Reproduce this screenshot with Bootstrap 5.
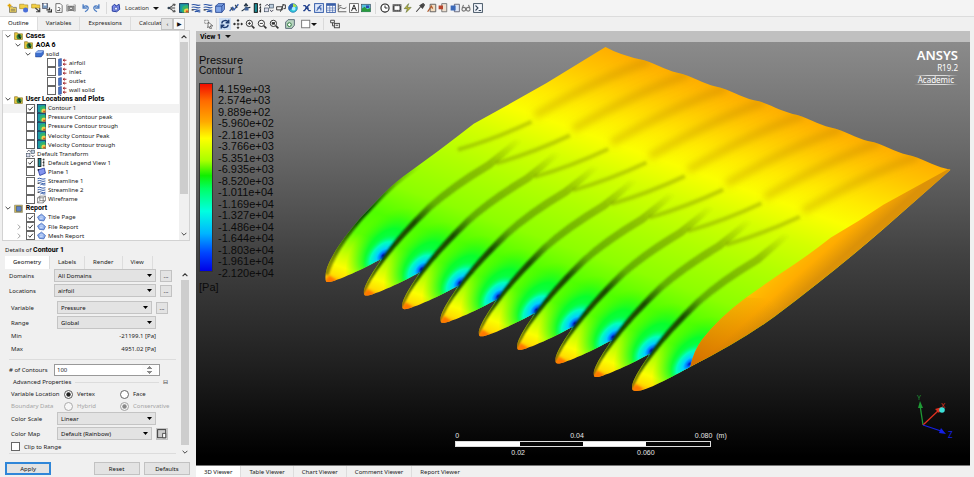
<!DOCTYPE html>
<html lang="en">
<head>
<meta charset="utf-8">
<meta name="viewport" content="width=device-width, initial-scale=1">
<title>CFD-Post</title>
<link href="https://cdn.jsdelivr.net/npm/bootstrap@5.3.0/dist/css/bootstrap.min.css" rel="stylesheet">
<style>
body{font:6px/8px "Noto Sans","Open Sans",sans-serif;color:#1a1a1a;background:#f0f0f0}
.fw-bold,strong{font-family:Roboto,"Noto Sans",sans-serif;font-size:7px;color:#000}
svg.ic{width:10px;height:10px;flex:none;display:block}
.tool{border:0;background:none;padding:0;display:flex;align-items:center;color:#333}
.topbar{height:17px;border-bottom:1px solid #dcdcdc;padding:0 7px;background:#f4f4f4}
.grp{display:flex;justify-content:space-between;align-items:center}
.g6{width:69px}.g5{width:58px}.g2{width:22px}.g9{width:103px}
.vsep{width:1px;height:12px;background:#dadada}
.caret{width:0;border:3px solid transparent;border-top:3px solid #111;border-bottom:0}
.side{flex:0 0 20%;min-width:196px;padding-right:6px}
.tabstrip{height:13px}
.tabstrip .nav-link{padding:2px 8px;color:#222;border-radius:0;border-right:1px solid #ddd}
.tabstrip .nav-link.active{background:#fff;color:#111}
.tree{background:#fff;border:1px solid #d2d2d2;margin-left:2px;margin-bottom:5px}
.tree li{flex:1 1 0;display:flex;align-items:center;gap:2px;white-space:nowrap}
.tree li.sel{background:#f2f2f2}
.tree li .ic{width:9px;height:9px}
.tree li.hd{gap:1px}
.exp{width:10px;flex:none;display:flex;justify-content:center}
.exp svg{width:6px;height:6px}
.l1{padding-left:10px}.l2{padding-left:20px}.l3{padding-left:44px}.c1{padding-left:23px}.x1{padding-left:11px}
.form-check-input{width:9px;height:9px;margin:0;flex:none;border:1px solid #666;float:none}
.form-check-input[type=checkbox]{border-radius:0}
.form-check-input:checked[type=checkbox]{background-color:#fff;border-color:#666;--bs-form-check-bg-image:url("data:image/svg+xml,%3csvg xmlns='http://www.w3.org/2000/svg' viewBox='0 0 10 10'%3e%3cpath fill='none' stroke='%23222' stroke-width='1.3' d='M2 5l2 2.5L8.500 2.500'/%3e%3c/svg%3e")}
.form-check-input:checked[type=radio]{background-color:#fff;border-color:#555;--bs-form-check-bg-image:url("data:image/svg+xml,%3csvg xmlns='http://www.w3.org/2000/svg' viewBox='0 0 10 10'%3e%3ccircle cx='5' cy='5' r='3.200' fill='%23222'/%3e%3c/svg%3e")}
.sbar{width:10px;flex:none;display:flex;flex-direction:column;align-items:center;background:#f0f0f0;padding:3px 0}
.sbar svg{width:6px;height:6px;flex:none}
.thumb{background:#cdcdcd;width:8px;margin-top:2px}
.details{padding-left:5px}
.frow{display:flex;align-items:center;min-height:13px;gap:4px}
.frow>label,.frow>.lab{width:41px;flex:none;white-space:nowrap}
.inset{padding-left:2px}
.inset>.frow>label,.inset .frow>label{width:42px}
.form-select{height:13px;min-height:0;padding:0 10px 0 3px;font-size:6px;line-height:8px;border:1px solid #c4c4c4;border-radius:0;background-color:#e3e3e3;color:#111;flex:1 1 0;min-width:0;
background-position:right 3px center;background-size:5px 5px;--bs-form-select-bg-img:url("data:image/svg+xml,%3csvg xmlns='http://www.w3.org/2000/svg' viewBox='0 0 10 10'%3e%3cpath d='M0 2h10L5 8z'/%3e%3c/svg%3e")}
.btn{font-size:6px;line-height:8px;padding:2px 4px;border-radius:0;border:1px solid #c2c2c2;background:#e3e3e3;color:#111}
.btn.more{width:12px;height:12px;padding:0;flex:none}
.btn.go{border:2px solid #2f86d8}
.btn.big{height:13px;padding:0 4px}
.num{height:12px;min-height:0;padding:0 2px;font-size:6px;line-height:8px;border:1px solid #999;border-radius:0;background:#fff}
.num::-webkit-inner-spin-button{opacity:1;height:10px}
.hr1{border-top:1px solid #dcdcdc}
.dim{color:#a5a5a5}
.viewbar{background:#c0c0c0;height:11px;padding-left:4px}
.stage{background:linear-gradient(#8b8b8b,#6b6b6b 24%,#424242 50%,#1f1f1f 77%,#000 98%);overflow:hidden;border-bottom:1px solid #777}
.stage .model{position:absolute;inset:0;width:100%;height:100%}
.legend{position:relative;font-family:"Liberation Sans",Arial,sans-serif;color:#0b0b0b;padding:13px 0 0 3px;font-size:11px;line-height:11px}
.legend .sub{font-size:10px;line-height:10px}
.rainbow{width:14px;height:189px;border:1px solid #333;background:linear-gradient(#f20d00,#ff6a00 9%,#ffa800 20%,#ffff00 29%,#a8ff00 41%,#10ee00 49%,#00ff66 56%,#00ffe0 68%,#00b4ff 80%,#0048ff 90%,#0000e6)}
.legbody{gap:5px;padding-top:7px;height:202px}
.vals{height:195px;margin-top:1px}
.vals li{flex:1 1 0;min-height:0;line-height:11px}
.brand{position:absolute;top:6px;right:12px;color:#fff;text-align:right}
.brand .nm{font:600 13px/15px "Noto Sans",sans-serif}
.brand .ver{font-size:8px;line-height:9px}
.brand .lic{font-size:8px;line-height:10px;margin-top:3px;padding:0 4px;background:linear-gradient(90deg,transparent,#ddd 30%,#ddd 70%,transparent) top/100% 1px no-repeat,linear-gradient(90deg,transparent,#ddd 30%,#ddd 70%,transparent) bottom/100% 1px no-repeat}
.ruler{position:absolute;left:33.5%;right:33.5%;bottom:8px;color:#e6e6e6;font:7px/8px "Liberation Sans",Arial,sans-serif}
.ruler .bar{border:1px solid #ddd;height:6px;margin:1px 0 2px}
.ruler .bar i{flex:1 1 0}.ruler .bar i:nth-child(odd){background:#fff}
.ruler .unit{margin-right:-16px}
.triad{position:absolute;right:12px;bottom:22px;width:45px;height:50px}
.mb-2px{margin-bottom:2px}.pb-2px{padding-bottom:2px}.gap-2px{gap:2px}.mt-2px{margin-top:2px}
.vtools{height:14px;flex:none}.tool.on{background:#cfe0f5;padding:1px}
.vtabs{height:11px}
.adv{min-height:12px}.rad{min-height:12px}.inset .rad>.rl{width:39px}.rad>.lab{width:49px}
.shrinkable{min-width:0;min-height:0}
</style>
<script src="https://cdn.jsdelivr.net/npm/bootstrap@5.3.0/dist/js/bootstrap.bundle.min.js"></script>
</head>
<body class="vh-100 d-flex flex-column overflow-hidden">
<svg width="0" height="0" class="position-absolute" aria-hidden="true"><defs>
<symbol id="chev" viewBox="0 0 10 10"><path d="M1 3l4 4 4-4" fill="none" stroke="#333" stroke-width="1.500"/></symbol>
<symbol id="chevu" viewBox="0 0 10 10"><path d="M1 7l4-4 4 4" fill="none" stroke="#333" stroke-width="1.800"/></symbol>
<symbol id="chevr" viewBox="0 0 10 10"><path d="M3 1l4 4-4 4" fill="none" stroke="#888" stroke-width="1.300"/></symbol>
<symbol id="i-open" viewBox="0 0 16 16"><path d="M4 6h5l1 1h5v8H4z" fill="#f5d860" stroke="#555"/><path d="M6 10h7M6 12.500h7" stroke="#555"/><path d="M1 4h6M4 1v6" stroke="#e2a400" stroke-width="2.500"/></symbol>
<symbol id="i-open2" viewBox="0 0 16 16"><path d="M1 2h7l1 1h5v6H1z" fill="#f3cf45" stroke="#a78a20"/><circle cx="10.500" cy="11" r="4" fill="#4a6fd8"/></symbol>
<symbol id="i-open3" viewBox="0 0 16 16"><path d="M1 2h7l1 1h5v5H1z" fill="#f3cf45" stroke="#a78a20"/><path d="M7 8l7 6M14 8v6H8" stroke="#444" stroke-width="1.800" fill="none"/></symbol>
<symbol id="i-save" viewBox="0 0 16 16"><rect x="1" y="1" width="8" height="8" fill="#7b9bc0" stroke="#445"/><path d="M3 1h4v3H3z" fill="#fff"/><path d="M7 11h5V7M9 14h6v-4" stroke="#333" stroke-width="2" fill="none"/></symbol>
<symbol id="i-doc" viewBox="0 0 16 16"><path d="M3 1h7l3 3v11H3z" fill="#fff" stroke="#555" stroke-width="1.300"/><path d="M6 8a2 2 0 1 1 2 3M5 12h5" fill="none" stroke="#555" stroke-width="1.500"/></symbol>
<symbol id="i-cam" viewBox="0 0 16 16"><path d="M1 3h3M12 3h3v10h-3M1 3v10h3" fill="none" stroke="#777"/><rect x="3" y="5" width="10" height="7" fill="#999" stroke="#555"/><circle cx="8" cy="8.500" r="2.300" fill="#eee" stroke="#444"/></symbol>
<symbol id="i-undo" viewBox="0 0 16 16"><path d="M5 2v6h6M5 8c1-5 9-4 8 1-1 3-3 4-5 5" fill="none" stroke="#4f7fc4" stroke-width="2.200"/></symbol>
<symbol id="i-redo" viewBox="0 0 16 16"><path d="M11 2v6H5M11 8c-1-5-9-4-8 1 1 3 3 4 5 5" fill="none" stroke="#4f7fc4" stroke-width="2.200"/></symbol>
<symbol id="i-loc" viewBox="0 0 16 16"><path d="M2 5l4-3 2 3 5-3 1 8-5 4-7-1z" fill="#7b8be8" stroke="#223a9c" stroke-width="1.500"/><circle cx="8" cy="9" r="2.500" fill="#e8edff" stroke="#223a9c"/></symbol>
<symbol id="i-vec" viewBox="0 0 16 16"><path d="M1 8h12M3 8l8-5M3 8l8 5M9 2l4 0-1 3M9 14h4l-1-3" fill="none" stroke="#333" stroke-width="1.500"/><circle cx="3" cy="8" r="2" fill="#345"/></symbol>
<symbol id="i-contour" viewBox="0 0 16 16"><rect x="1" y="1" width="14" height="14" fill="#1b9aa6" stroke="#135" stroke-width="1.500"/><path d="M5 15V9c0-4 4-6 10-5v11z" fill="#35b56a"/><path d="M8 15v-3c0-3 3-4 7-3v6z" fill="#f2d34a"/><path d="M11 15v-3h4v3z" fill="#d8502a"/></symbol>
<symbol id="i-stream" viewBox="0 0 16 16"><path d="M1 3c5-3 7 3 14 0M1 7c5-3 7 3 14 0M3 11c4-3 6 3 12 0M6 14c3-2 5 1 9 0" fill="none" stroke="#2c55a6" stroke-width="1.700"/><path d="M1 11h3" stroke="#222" stroke-width="2"/></symbol>
<symbol id="i-vol" viewBox="0 0 16 16"><path d="M1 5l4-4h10v9l-4 5H1z" fill="#7fa5e8" stroke="#1f3f8c" stroke-width="1.300"/><path d="M1 5h10v10M11 5l4-4" fill="none" stroke="#1f3f8c" stroke-width="1.300"/></symbol>
<symbol id="i-solid" viewBox="0 0 16 16"><path d="M1 7l4-4h10v6l-4 5H1z" fill="#3d6fd0" stroke="#1f3f8c"/><path d="M1 7l4-4h10l-4 4z" fill="#8fb2f0"/></symbol>
<symbol id="i-line" viewBox="0 0 16 16"><path d="M1 13L6 7l2 4 7-9" fill="none" stroke="#2c55a6" stroke-width="2"/><path d="M3 7l3 5M10 3l3 5" stroke="#345" stroke-width="2"/></symbol>
<symbol id="i-part" viewBox="0 0 16 16"><path d="M1 13l7-5 7-1M8 8V1M5 5l3-4 3 4" fill="none" stroke="#234" stroke-width="1.700"/><path d="M6 7h6v5H6z" fill="#41649c"/></symbol>
<symbol id="i-legend" viewBox="0 0 16 16"><rect x="2" y="1" width="5" height="14" fill="#1d8e98" stroke="#111" stroke-width="1.500"/><path d="M10 3h3M10 8h3M10 13h3M12 1v14" stroke="#333" stroke-width="1.700" stroke-dasharray="3 1"/></symbol>
<symbol id="i-xform" viewBox="0 0 16 16"><rect x="1" y="8" width="6" height="6" fill="#dde" stroke="#345"/><rect x="9" y="2" width="6" height="6" fill="#bcd" stroke="#345"/><path d="M2 5l3-3 3 3M10 11l2 3 3-3" fill="none" stroke="#445" stroke-width="1.500"/></symbol>
<symbol id="i-clip" viewBox="0 0 16 16"><path d="M1 6h9v5H1zM12 2L7 14M10 3h5v6h-3" fill="none" stroke="#333" stroke-width="1.500"/></symbol>
<symbol id="i-color" viewBox="0 0 16 16"><circle cx="8" cy="8" r="7" fill="#27c3d8" stroke="#2b6fae"/><path d="M8 8L2 12A7 7 0 0 1 8 1z" fill="#2f62b8"/><path d="M8 8V1a7 7 0 0 1 6 4z" fill="#a8e04a"/><circle cx="9" cy="9" r="3" fill="#aef"/></symbol>
<symbol id="i-x" viewBox="0 0 16 16"><path d="M2 4h3l6 8h3M13 3h-2L4 12H2M5 8h6" fill="none" stroke="#1f3f8c" stroke-width="2"/></symbol>
<symbol id="i-fx" viewBox="0 0 16 16"><rect x="1" y="1" width="14" height="14" fill="#dfe9fb" stroke="#2c55a6" stroke-width="1.500"/><path d="M4 12c4 0 2-8 8-8M5 8h6v4" fill="none" stroke="#2c55a6" stroke-width="1.700"/></symbol>
<symbol id="i-table" viewBox="0 0 16 16"><rect x="1" y="1" width="14" height="14" fill="#fff" stroke="#3a5fa8" stroke-width="1.500"/><path d="M1 3h14" stroke="#3a5fa8" stroke-width="3"/><path d="M1 8h14M1 11.500h14M6 4v11M10.500 4v11" stroke="#3a5fa8"/></symbol>
<symbol id="i-chart" viewBox="0 0 16 16"><path d="M2 1v13h13M2 11c4-9 7 2 13-4M2 5l5-1" fill="none" stroke="#555" stroke-width="1.400"/></symbol>
<symbol id="i-text" viewBox="0 0 16 16"><rect x="1" y="1" width="14" height="14" fill="#fff" stroke="#555" stroke-width="1.300"/><path d="M4 13L8 3l4 10M5.500 9h5" fill="none" stroke="#222" stroke-width="1.500"/></symbol>
<symbol id="i-fig" viewBox="0 0 16 16"><rect x="1" y="2" width="14" height="12" fill="#56c0e0" stroke="#345"/><path d="M1 14V9l5-3 4 4 5-2v6z" fill="#2a9a3c"/><path d="M8 4h5v4H8z" fill="#2b49b0"/></symbol>
<symbol id="i-clock" viewBox="0 0 16 16"><circle cx="8" cy="8" r="6.500" fill="#fff" stroke="#222" stroke-width="1.800"/><path d="M8 4v4h4" fill="none" stroke="#222" stroke-width="1.500"/></symbol>
<symbol id="i-film" viewBox="0 0 16 16"><rect x="1" y="2" width="14" height="12" fill="#444"/><rect x="4" y="5" width="8" height="6" fill="#fff"/><path d="M1 3.500h14M1 12.500h14" stroke="#ddd" stroke-dasharray="1.500 1.500"/></symbol>
<symbol id="i-bolt" viewBox="0 0 16 16"><path d="M9 1l-2 6h6l-8 8 2-6H2z" fill="#c3b53a" stroke="#576b33"/></symbol>
<symbol id="i-probe" viewBox="0 0 16 16"><path d="M2 14l7-8M8 4l4 4 3-5-2-2z" fill="#444" stroke="#444" stroke-width="1.800"/></symbol>
<symbol id="i-rep" viewBox="0 0 16 16"><path d="M5 2h9v12H5z" fill="#f2dcc0" stroke="#555" stroke-width="1.400"/><path d="M1 14l6-9 2 4" fill="none" stroke="#b05a2c" stroke-width="2"/></symbol>
<symbol id="i-rep2" viewBox="0 0 16 16"><path d="M6 1h8v13H6z" fill="#eee0d0" stroke="#666" stroke-width="1.300"/><path d="M1 4h7v6H1z" fill="#b8432a"/></symbol>
<symbol id="i-rep3" viewBox="0 0 16 16"><path d="M7 2h8v12H7z" fill="#dde6f5" stroke="#556" stroke-width="1.300"/><path d="M1 4h8v8H1z" fill="#3b68b8"/></symbol>
<symbol id="i-glass" viewBox="0 0 16 16"><circle cx="4.500" cy="10" r="3" fill="none" stroke="#777" stroke-width="1.800"/><circle cx="11.500" cy="10" r="3" fill="none" stroke="#777" stroke-width="1.800"/><path d="M2 8l2-5M14 8l-2-5M7 9h2" stroke="#777" stroke-width="1.800"/></symbol>
<symbol id="i-cmd" viewBox="0 0 16 16"><rect x="1" y="1" width="14" height="14" fill="#f6f9ff" stroke="#345" stroke-width="1.400"/><path d="M4 4l4 4-4 4M9 12h4" fill="none" stroke="#345" stroke-width="1.700"/></symbol>
<symbol id="i-case" viewBox="0 0 16 16"><path d="M1 3h5l1 2h8v10H1z" fill="#e8c83c" stroke="#776418"/><circle cx="9" cy="10" r="4.500" fill="#2f7d3c"/><path d="M9 6v4l3 3" stroke="#111" stroke-width="2" fill="none"/></symbol>
<symbol id="i-rfold" viewBox="0 0 16 16"><path d="M1 2h14v13H1z" fill="#e2c452" stroke="#776"/><path d="M4 4h9v9H4z" fill="#5f84c9" stroke="#345"/></symbol>
<symbol id="i-bnd" viewBox="0 0 16 16"><path d="M1 2l5-1v13l-5 1z" fill="#4a78c8" stroke="#1f3f8c"/><path d="M15 4H9m3-2L9 4l3 2M15 11H9m3-2l-3 2 3 2" fill="none" stroke="#a3262a" stroke-width="1.700"/></symbol>
<symbol id="i-plane" viewBox="0 0 16 16"><path d="M2 5l11-3 2 9-10 4z" fill="#8495ee" stroke="#2c3fa6" stroke-width="1.500"/><circle cx="2.500" cy="5" r="1.500" fill="#223"/></symbol>
<symbol id="i-wire" viewBox="0 0 16 16"><path d="M1 5l4-3h10v8l-4 4H1zM1 5h10v9M11 5l4-3M5 2v8h10M5 10l-4 4" fill="none" stroke="#555" stroke-width="1.100"/></symbol>
<symbol id="i-page" viewBox="0 0 16 16"><path d="M8 2l7 6-3 6-8-1-3-6z" fill="#8fb0ee" stroke="#3d63b5" stroke-width="1.400"/><path d="M5 7h6M5 10h5" stroke="#fff"/></symbol>
<symbol id="i-pick" viewBox="0 0 16 16"><rect x="1" y="2" width="6" height="5" fill="none" stroke="#555" stroke-dasharray="2 1"/><path d="M7 5l7 6-4 0 2 4-2 1-2-4-2 2z" fill="#fff" stroke="#222"/></symbol>
<symbol id="i-rot" viewBox="0 0 16 16"><path d="M3 7c0-5 8-6 10-2M13 9c0 5-8 6-10 2M14 1v5H9M2 15v-5h5" fill="none" stroke="#1d3a70" stroke-width="2.200"/></symbol>
<symbol id="i-pan" viewBox="0 0 16 16"><path d="M8 1v14M1 8h14" stroke="#222" stroke-width="1.500" stroke-dasharray="4 1.500"/><path d="M8 0l2.500 3h-5zM8 16l2.500-3h-5zM0 8l3-2.500v5zM16 8l-3-2.500v5z" fill="#222"/></symbol>
<symbol id="i-zoom" viewBox="0 0 16 16"><circle cx="7" cy="7" r="5" fill="#fff" stroke="#333" stroke-width="1.600"/><path d="M11 11l4 4" stroke="#333" stroke-width="2.500"/><path d="M4.500 7h5" stroke="#333" stroke-width="1.500"/></symbol>
<symbol id="i-zoomp" viewBox="0 0 16 16"><use href="#i-zoom"/><path d="M7 4.500v5" stroke="#333" stroke-width="1.500"/></symbol>
<symbol id="i-zoomf" viewBox="0 0 16 16"><use href="#i-zoom"/><path d="M4.500 5h5v4h-5z" fill="#333"/></symbol>
<symbol id="i-fit" viewBox="0 0 16 16"><path d="M1 5l4-4h10v9l-4 5H1z" fill="#b8d4c0" stroke="#456" stroke-width="1.300"/><circle cx="7" cy="9" r="3" fill="#fff" stroke="#2b7a3c" stroke-width="1.600"/></symbol>
<symbol id="i-box" viewBox="0 0 16 16"><rect x="1" y="2" width="13" height="12" fill="#fff" stroke="#777" stroke-width="1.500"/></symbol>
<symbol id="i-sync" viewBox="0 0 16 16"><rect x="7" y="7" width="8" height="7" fill="#eee" stroke="#444" stroke-width="1.500"/><path d="M1 2h6v4H1zM4 6v5h3M9 10h4" fill="none" stroke="#444" stroke-width="1.500"/></symbol>
<symbol id="i-cmap" viewBox="0 0 16 16"><rect x="1" y="1" width="13" height="13" fill="#ccc" stroke="#333" stroke-width="1.500"/><path d="M9 7h5v7H9z" fill="#fff" stroke="#333" stroke-width="1.300"/></symbol>
</defs></svg>

<header class="topbar d-flex align-items-center flex-shrink-0" role="toolbar" aria-label="Main">
  <div class="grp g6">
    <button class="tool" aria-label="Load results"><svg class="ic"><use href="#i-open"/></svg></button><button class="tool" aria-label="Load state"><svg class="ic"><use href="#i-open2"/></svg></button><button class="tool" aria-label="Import"><svg class="ic"><use href="#i-open3"/></svg></button><button class="tool" aria-label="Save state"><svg class="ic"><use href="#i-save"/></svg></button><button class="tool" aria-label="Refresh report"><svg class="ic"><use href="#i-doc"/></svg></button><button class="tool" aria-label="Save picture"><svg class="ic"><use href="#i-cam"/></svg></button>
  </div>
  <div class="grp g2 ms-1">
    <button class="tool" aria-label="Undo"><svg class="ic"><use href="#i-undo"/></svg></button><button class="tool" aria-label="Redo"><svg class="ic"><use href="#i-redo"/></svg></button>
  </div>
  <span class="vsep ms-1"></span>
  <button class="tool ms-1 gap-1"><svg class="ic"><use href="#i-loc"/></svg>Location <span class="caret"></span></button>
  <div class="grp g5 ms-2">
    <button class="tool" aria-label="Vector"><svg class="ic"><use href="#i-vec"/></svg></button><button class="tool" aria-label="Contour"><svg class="ic"><use href="#i-contour"/></svg></button><button class="tool" aria-label="Streamline"><svg class="ic"><use href="#i-stream"/></svg></button><button class="tool" aria-label="Particle track"><svg class="ic"><use href="#i-stream"/></svg></button><button class="tool" aria-label="Volume rendering"><svg class="ic"><use href="#i-vol"/></svg></button>
  </div>
  <div class="grp g6 ms-1">
    <button class="tool" aria-label="Line"><svg class="ic"><use href="#i-line"/></svg></button><button class="tool" aria-label="Part"><svg class="ic"><use href="#i-part"/></svg></button><button class="tool" aria-label="Legend"><svg class="ic"><use href="#i-legend"/></svg></button><button class="tool" aria-label="Transform"><svg class="ic"><use href="#i-xform"/></svg></button><button class="tool" aria-label="Clip plane"><svg class="ic"><use href="#i-clip"/></svg></button><button class="tool" aria-label="Colour map"><svg class="ic"><use href="#i-color"/></svg></button>
  </div>
  <div class="grp g6 ms-1">
    <button class="tool" aria-label="Variable"><svg class="ic"><use href="#i-x"/></svg></button><button class="tool" aria-label="Expression"><svg class="ic"><use href="#i-fx"/></svg></button><button class="tool" aria-label="Table"><svg class="ic"><use href="#i-table"/></svg></button><button class="tool" aria-label="Chart"><svg class="ic"><use href="#i-chart"/></svg></button><button class="tool" aria-label="Text"><svg class="ic"><use href="#i-text"/></svg></button><button class="tool" aria-label="Figure"><svg class="ic"><use href="#i-fig"/></svg></button>
  </div>
  <span class="vsep ms-1"></span>
  <div class="grp g9 ms-1">
    <button class="tool" aria-label="Timesteps"><svg class="ic"><use href="#i-clock"/></svg></button><button class="tool" aria-label="Animation"><svg class="ic"><use href="#i-film"/></svg></button><button class="tool" aria-label="Quick edit"><svg class="ic"><use href="#i-bolt"/></svg></button><button class="tool" aria-label="Probe"><svg class="ic"><use href="#i-probe"/></svg></button><button class="tool" aria-label="Turbo report"><svg class="ic"><use href="#i-rep"/></svg></button><button class="tool" aria-label="Compare"><svg class="ic"><use href="#i-rep2"/></svg></button><button class="tool" aria-label="Case comparison"><svg class="ic"><use href="#i-rep3"/></svg></button><button class="tool" aria-label="Inspect"><svg class="ic"><use href="#i-glass"/></svg></button><button class="tool" aria-label="Command editor"><svg class="ic"><use href="#i-cmd"/></svg></button>
  </div>
</header>

<div class="d-flex flex-grow-1 pe-1 shrinkable">
<aside class="side d-flex flex-column">
  <div class="d-flex align-items-center">
    <nav class="nav tabstrip flex-nowrap overflow-hidden">
      <a class="nav-link active" href="#outline">Outline</a><a class="nav-link" href="#variables">Variables</a><a class="nav-link" href="#expressions">Expressions</a><a class="nav-link pe-0 border-0" href="#calculators">Calculat</a>
    </nav>
    <button class="btn more" aria-label="Scroll tabs left">‹</button><button class="btn more bg-light" aria-label="Scroll tabs right">▶</button>
  </div>
  <div class="tree d-flex flex-grow-1" id="outline">
    <ul class="list-unstyled d-flex flex-column flex-grow-1 m-0">
      <li class="hd fw-bold"><span class="exp"><svg><use href="#chev"/></svg></span><svg class="ic"><use href="#i-case"/></svg>&nbsp;Cases</li>
      <li class="hd fw-bold l1"><span class="exp"><svg><use href="#chev"/></svg></span><svg class="ic"><use href="#i-case"/></svg>&nbsp;AOA 6</li>
      <li class="l2"><span class="exp"><svg><use href="#chev"/></svg></span><svg class="ic"><use href="#i-solid"/></svg>solid</li>
      <li class="l3"><input class="form-check-input" type="checkbox" id="t1"><svg class="ic"><use href="#i-bnd"/></svg><label for="t1">airfoil</label></li>
      <li class="l3"><input class="form-check-input" type="checkbox" id="t2"><svg class="ic"><use href="#i-bnd"/></svg><label for="t2">inlet</label></li>
      <li class="l3"><input class="form-check-input" type="checkbox" id="t3"><svg class="ic"><use href="#i-bnd"/></svg><label for="t3">outlet</label></li>
      <li class="l3"><input class="form-check-input" type="checkbox" id="t4"><svg class="ic"><use href="#i-bnd"/></svg><label for="t4">wall solid</label></li>
      <li class="hd fw-bold"><span class="exp"><svg><use href="#chev"/></svg></span><svg class="ic"><use href="#i-case"/></svg>&nbsp;User Locations and Plots</li>
      <li class="c1 sel"><input class="form-check-input" type="checkbox" id="t5" checked><svg class="ic"><use href="#i-contour"/></svg><label for="t5">Contour 1</label></li>
      <li class="c1"><input class="form-check-input" type="checkbox" id="t6"><svg class="ic"><use href="#i-contour"/></svg><label for="t6">Pressure Contour peak</label></li>
      <li class="c1"><input class="form-check-input" type="checkbox" id="t7"><svg class="ic"><use href="#i-contour"/></svg><label for="t7">Pressure Contour trough</label></li>
      <li class="c1"><input class="form-check-input" type="checkbox" id="t8"><svg class="ic"><use href="#i-contour"/></svg><label for="t8">Velocity Contour Peak</label></li>
      <li class="c1"><input class="form-check-input" type="checkbox" id="t9"><svg class="ic"><use href="#i-contour"/></svg><label for="t9">Velocity Contour trough</label></li>
      <li class="c1"><svg class="ic"><use href="#i-xform"/></svg>Default Transform</li>
      <li class="c1"><input class="form-check-input" type="checkbox" id="t10" checked><svg class="ic"><use href="#i-legend"/></svg><label for="t10">Default Legend View 1</label></li>
      <li class="c1"><input class="form-check-input" type="checkbox" id="t11"><svg class="ic"><use href="#i-plane"/></svg><label for="t11">Plane 1</label></li>
      <li class="c1"><input class="form-check-input" type="checkbox" id="t12"><svg class="ic"><use href="#i-stream"/></svg><label for="t12">Streamline 1</label></li>
      <li class="c1"><input class="form-check-input" type="checkbox" id="t13"><svg class="ic"><use href="#i-stream"/></svg><label for="t13">Streamline 2</label></li>
      <li class="c1"><input class="form-check-input" type="checkbox" id="t14"><svg class="ic"><use href="#i-wire"/></svg><label for="t14">Wireframe</label></li>
      <li class="hd fw-bold"><span class="exp"><svg><use href="#chev"/></svg></span><svg class="ic"><use href="#i-rfold"/></svg>&nbsp;Report</li>
      <li class="c1"><input class="form-check-input" type="checkbox" id="t15" checked><svg class="ic"><use href="#i-page"/></svg><label for="t15">Title Page</label></li>
      <li class="x1"><span class="exp"><svg><use href="#chevr"/></svg></span><input class="form-check-input" type="checkbox" id="t16" checked><svg class="ic"><use href="#i-page"/></svg><label for="t16">File Report</label></li>
      <li class="x1"><span class="exp"><svg><use href="#chevr"/></svg></span><input class="form-check-input" type="checkbox" id="t17" checked><svg class="ic"><use href="#i-page"/></svg><label for="t17">Mesh Report</label></li>
    </ul>
    <div class="sbar"><svg><use href="#chevu"/></svg><span class="thumb h-75"></span><svg class="mt-auto"><use href="#chev"/></svg></div>
  </div>

  <form class="details flex-shrink-0" onsubmit="return false">
    <div class="mb-2px">Details of <strong>Contour 1</strong></div>
    <nav class="nav tabstrip">
      <a class="nav-link active" href="#geometry">Geometry</a><a class="nav-link" href="#labels">Labels</a><a class="nav-link" href="#render">Render</a><a class="nav-link" href="#view">View</a>
    </nav>
    <div class="d-flex" id="geometry">
      <div class="flex-grow-1 ps-1 pe-1">
        <div class="frow mb-2px"><label for="dom">Domains</label><select class="form-select" id="dom"><option>All Domains</option></select><button class="btn more me-1" aria-label="More domains">...</button></div>
        <div class="frow"><label for="loc">Locations</label><select class="form-select" id="loc"><option>airfoil</option></select><button class="btn more me-1" aria-label="More locations">...</button></div>
        <div class="inset pt-1 pe-1">
          <div class="frow mb-2px"><label for="var">Variable</label><select class="form-select" id="var"><option>Pressure</option></select><button class="btn more me-1" aria-label="More variables">...</button></div>
          <div class="frow"><label for="rng">Range</label><select class="form-select me-3" id="rng"><option>Global</option></select></div>
          <div class="frow"><span class="lab">Min</span><output class="ms-auto me-3">-21199.1 [Pa]</output></div>
          <div class="frow"><span class="lab">Max</span><output class="ms-auto me-3">4951.02 [Pa]</output></div>
        </div>
        <div class="hr1 frow mt-1 pt-1"><label for="cnt"># of Contours</label><input class="form-control num me-3" type="number" id="cnt" value="100"></div>
        <div class="frow adv"><span class="ps-1">Advanced Properties</span><span class="hr1 flex-grow-1"></span><button class="tool me-2" aria-label="Collapse">⊟</button></div>
        <div class="inset">
          <div class="frow rad"><span class="lab">Variable Location</span><input class="form-check-input" type="radio" name="vl" id="r1" checked><label for="r1" class="rl">Vertex</label><input class="form-check-input" type="radio" name="vl" id="r2"><label for="r2" class="rl">Face</label></div>
          <div class="frow rad dim"><span class="lab">Boundary Data</span><input class="form-check-input" type="radio" name="bd" id="r3" disabled><label for="r3" class="rl">Hybrid</label><input class="form-check-input" type="radio" name="bd" id="r4" checked disabled><label for="r4" class="rl">Conservative</label></div>
          <div class="pe-1">
          <div class="frow mb-2px"><label for="sc">Color Scale</label><select class="form-select me-3" id="sc"><option>Linear</option></select></div>
          <div class="frow"><label for="cm">Color Map</label><select class="form-select" id="cm"><option>Default (Rainbow)</option></select><button class="btn more me-1" aria-label="Edit colour map"><svg class="ic"><use href="#i-cmap"/></svg></button></div>
          </div>
          <div class="frow"><input class="form-check-input" type="checkbox" id="clip"><label for="clip">Clip to Range</label></div>
        </div>
        <div class="hr1 mb-1"></div>
      </div>
      <div class="sbar"><svg><use href="#chevu"/></svg><span class="thumb flex-grow-1 mb-1"></span><svg><use href="#chev"/></svg></div>
    </div>
    <div class="d-flex pt-1 pb-2px gap-1">
      <button class="btn big go col-3">Apply</button><button class="btn big col-3 ms-auto">Reset</button><button class="btn big col-3">Defaults</button>
    </div>
  </form>
</aside>

<main class="d-flex flex-column flex-grow-1 shrinkable">
  <div class="vtools d-flex align-items-center gap-2px ps-2" role="toolbar" aria-label="Viewer">
    <button class="tool" aria-label="Select"><svg class="ic"><use href="#i-pick"/></svg></button><span class="vsep"></span>
    <button class="tool on" aria-label="Rotate"><svg class="ic"><use href="#i-rot"/></svg></button><button class="tool" aria-label="Pan"><svg class="ic"><use href="#i-pan"/></svg></button><button class="tool" aria-label="Zoom in"><svg class="ic"><use href="#i-zoomp"/></svg></button><button class="tool" aria-label="Zoom out"><svg class="ic"><use href="#i-zoom"/></svg></button><button class="tool" aria-label="Zoom box"><svg class="ic"><use href="#i-zoomf"/></svg></button>
    <button class="tool ms-1" aria-label="Fit view"><svg class="ic"><use href="#i-fit"/></svg></button>
    <button class="tool ms-1" aria-label="Viewports"><svg class="ic"><use href="#i-box"/></svg><span class="caret"></span></button><span class="vsep ms-1"></span>
    <button class="tool ms-1" aria-label="Synchronise"><svg class="ic"><use href="#i-sync"/></svg></button>
  </div>
  <div class="viewbar d-flex align-items-center gap-1 fw-bold flex-shrink-0">View 1 <span class="caret"></span></div>
  <section class="stage position-relative flex-grow-1">
    <svg class="model" viewBox="196 42 775 424" preserveAspectRatio="xMidYMid meet" role="img" aria-label="Pressure contour on a wing surface">
      <defs>
        <linearGradient id="base" gradientUnits="userSpaceOnUse" x1="606" y1="47" x2="501" y2="344">
          <stop offset="0" stop-color="#ffae00"/><stop offset=".08" stop-color="#ffc400"/><stop offset=".2" stop-color="#ffea00"/><stop offset=".28" stop-color="#fbff00"/><stop offset=".38" stop-color="#d4ff00"/><stop offset=".5" stop-color="#b0ff00"/><stop offset=".64" stop-color="#8cff00"/><stop offset=".74" stop-color="#50ff00"/><stop offset=".82" stop-color="#5cff00"/><stop offset=".88" stop-color="#b0ff00"/><stop offset=".94" stop-color="#fbff00"/><stop offset=".97" stop-color="#ffe000"/><stop offset="1" stop-color="#ff9a00"/>
        </linearGradient>
        <linearGradient id="flank" gradientUnits="userSpaceOnUse" x1="765" y1="280" x2="788" y2="306">
          <stop offset="0" stop-color="#ffc000"/><stop offset=".55" stop-color="#ffac00"/><stop offset="1" stop-color="#dc9208"/>
        </linearGradient>
        <linearGradient id="root" gradientUnits="userSpaceOnUse" x1="692" y1="367" x2="770" y2="300">
          <stop offset="0" stop-color="#c05000" stop-opacity=".7"/><stop offset="1" stop-color="#c07000" stop-opacity="0"/>
        </linearGradient>
        <linearGradient id="band" gradientUnits="userSpaceOnUse" x1="378" y1="268" x2="520" y2="138">
          <stop offset="0" stop-color="#062000" stop-opacity=".85"/><stop offset=".3" stop-color="#0a2c00" stop-opacity=".85"/><stop offset=".44" stop-color="#304400" stop-opacity=".42"/><stop offset=".8" stop-color="#506000" stop-opacity=".36"/><stop offset="1" stop-color="#506000" stop-opacity="0"/>
        </linearGradient>
        <linearGradient id="edge" gradientUnits="userSpaceOnUse" x1="326" y1="270" x2="420" y2="165">
          <stop offset="0" stop-color="#223000" stop-opacity=".5"/><stop offset=".5" stop-color="#002c08" stop-opacity=".9"/><stop offset="1" stop-color="#204000" stop-opacity="0"/>
        </linearGradient>
        <radialGradient id="green" gradientUnits="userSpaceOnUse" cx="0" cy="0" r="1" gradientTransform="translate(385 250) rotate(-48) scale(50 29)">
          <stop offset="0" stop-color="#00ff70"/><stop offset=".5" stop-color="#00ff30" stop-opacity=".9"/><stop offset="1" stop-color="#40ff00" stop-opacity="0"/>
        </radialGradient>
        <radialGradient id="cyan" gradientUnits="userSpaceOnUse" cx="0" cy="0" r="1" gradientTransform="translate(383 256) rotate(-48) scale(25 15)">
          <stop offset="0" stop-color="#0010c0"/><stop offset=".13" stop-color="#0070ff"/><stop offset=".32" stop-color="#00d0ff"/><stop offset=".65" stop-color="#00ffc8" stop-opacity=".9"/><stop offset="1" stop-color="#00ff60" stop-opacity="0"/>
        </radialGradient>
        <filter id="b1" x="-20%" y="-20%" width="140%" height="140%"><feGaussianBlur stdDeviation="1"/></filter>
        <filter id="b2" x="-20%" y="-60%" width="140%" height="220%"><feGaussianBlur stdDeviation="1.800"/></filter>
        <filter id="b3" x="-30%" y="-60%" width="160%" height="220%"><feGaussianBlur stdDeviation="3.500"/></filter>
        <clipPath id="lobe"><path d="M330 300L383 260Q396 238 428 207L400 170L320 200z"/></clipPath>
        <clipPath id="body"><path d="M606 47L547 83L503 108L474 124Q456 138 440 150L403 177Q390 187 377 201L360 219C348 233 333 252 327 268Q324 278 326 282
          c3 4 38-13 56-23c-8 12-21 30-17.600 36.600
          c3 4 38-13 56-23c-8 12-21 30-17.600 36.600
          c3 4 38-13 56-23c-8 12-21 30-17.600 36.600
          c3 4 38-13 56-23c-8 12-21 30-17.600 36.600
          c3 4 38-13 56-23c-8 12-21 30-17.600 36.600
          c3 4 38-13 56-23c-8 12-21 30-17.600 36.600
          c3 4 38-13 56-23c-8 12-21 30-17.600 36.600
          c3 4 38-13 56-23c-8 12-21 30-17.600 36.600
          C640 396 668 380 692 367Q740 343 776 317Q838 270 884 230L952 170
          c-14-2.500-24-9-38.400-13.700c-14-2.500-24-9-38.400-13.700c-14-2.500-24-9-38.400-13.700c-14-2.500-24-9-38.400-13.700c-14-2.500-24-9-38.400-13.700c-14-2.500-24-9-38.400-13.700c-14-2.500-24-9-38.400-13.700c-14-2.500-24-9-38.400-13.700Q620 55 606 47z"/></clipPath>
        <g id="glow"><g clip-path="url(#lobe)"><rect x="325" y="180" width="115" height="100" fill="url(#green)"/><rect x="345" y="220" width="70" height="60" fill="url(#cyan)"/></g></g>
        <g id="dark"><path d="M363 294Q366 282 383 257Q397 236 428 205Q450 184 487 162L515 140L524 140L492 168Q455 190 432 210Q402 238 384 262Q368 282 364 295z" fill="url(#band)" filter="url(#b1)"/>
          <path d="M458 150Q496 139 532 122" fill="none" stroke="#6a7000" stroke-opacity=".34" stroke-width="4" filter="url(#b2)"/></g>
        <path id="tip" d="M325 282q2 5 12-1l-8-5z" fill="#ff7800" filter="url(#b1)"/>
        <path id="stripe" d="M650 61Q600 78 535 116" fill="none" stroke="#a87800" stroke-opacity=".3" stroke-width="8" filter="url(#b3)"/>
      </defs>
      <g clip-path="url(#body)">
        <rect x="320" y="40" width="640" height="360" fill="url(#base)"/>
        <use href="#stripe"/><use href="#stripe" x="38.400" y="13.700"/><use href="#stripe" x="76.800" y="27.400"/><use href="#stripe" x="115.200" y="41"/><use href="#stripe" x="153.600" y="54.700"/><use href="#stripe" x="192" y="68.400"/><use href="#stripe" x="230.400" y="82"/><use href="#stripe" x="268.800" y="95.700"/>
        <use href="#glow"/><use href="#glow" x="38.400" y="13.600"/><use href="#glow" x="76.800" y="27.200"/><use href="#glow" x="115.200" y="40.800"/><use href="#glow" x="153.600" y="54.400"/><use href="#glow" x="192" y="68"/><use href="#glow" x="230.400" y="81.600"/><use href="#glow" x="268.800" y="95.200"/><use href="#glow" x="307.200" y="108.800"/>
        <use href="#dark"/><use href="#dark" x="38.400" y="13.600"/><use href="#dark" x="76.800" y="27.200"/><use href="#dark" x="115.200" y="40.800"/><use href="#dark" x="153.600" y="54.400"/><use href="#dark" x="192" y="68"/><use href="#dark" x="230.400" y="81.600"/><use href="#dark" x="268.800" y="95.200"/>
        <path d="M326 275C333 252 348 233 360 219L377 201Q390 187 403 177L420 165" fill="none" stroke="url(#edge)" stroke-width="5" filter="url(#b1)"/>
        <use href="#tip"/><use href="#tip" x="38.400" y="13.600"/><use href="#tip" x="76.800" y="27.200"/><use href="#tip" x="115.200" y="40.800"/><use href="#tip" x="153.600" y="54.400"/><use href="#tip" x="192" y="68"/><use href="#tip" x="230.400" y="81.600"/><use href="#tip" x="268.800" y="95.200"/><use href="#tip" x="307.200" y="108.800"/>
        <path id="side-face" d="M691 368Q694 352 703 340Q720 318 747 298L780 275Q808 257 832 238Q860 222 885 205L952 168V200L840 290L714 378z" fill="url(#flank)"/>
        <path d="M691 368Q694 352 703 340Q720 318 747 298L790 300L714 378z" fill="url(#root)"/>
      </g>
    </svg>
    <div class="legend">
      <div>Pressure</div><div class="sub">Contour 1</div>
      <div class="d-flex legbody">
        <div class="rainbow"></div>
        <ul class="vals list-unstyled d-flex flex-column mb-0"><li>4.159e+03</li><li>2.574e+03</li><li>9.889e+02</li><li>-5.960e+02</li><li>-2.181e+03</li><li>-3.766e+03</li><li>-5.351e+03</li><li>-6.935e+03</li><li>-8.520e+03</li><li>-1.011e+04</li><li>-1.169e+04</li><li>-1.327e+04</li><li>-1.486e+04</li><li>-1.644e+04</li><li>-1.803e+04</li><li>-1.961e+04</li><li>-2.120e+04</li></ul>
      </div>
      <div class="mt-1">[Pa]</div>
    </div>
    <div class="brand"><div class="nm">ANSYS</div><div class="ver">R19.2</div><div class="lic">Academic</div></div>
    <div class="ruler">
      <div class="d-flex justify-content-between"><span>0</span><span>0.04</span><span class="text-nowrap unit">0.080 &nbsp;(m)</span></div>
      <div class="bar d-flex"><i></i><i></i><i></i><i></i></div>
      <div class="d-flex justify-content-around"><span>0.02</span><span>0.060</span></div>
    </div>
    <svg class="triad" viewBox="0 0 45 50" role="img" aria-label="Axes">
      <path d="M10 32L7 12" stroke="#1f9a35" stroke-width="1.300"/><path d="M7 8l3 7H5z" fill="#1f9a35"/>
      <path d="M10 32L26 17" stroke="#e03020" stroke-width="1.300"/><path d="M29 14l-3 6-4-4z" fill="#e03020"/>
      <path d="M10 32L28 38" stroke="#1520e8" stroke-width="1.300"/><path d="M33 41l-7-1 2-5z" fill="#1520e8"/>
      <text x="4" y="7" font-size="7" fill="#1f9a35">Y</text><text x="28" y="15" font-size="7" fill="#e03020">X</text><text x="35" y="45" font-size="8" fill="#1520e8">Z</text>
      <circle cx="29" cy="17" r="2.800" fill="#3de0d8"/>
    </svg>
  </section>
  <nav class="nav tabstrip vtabs flex-shrink-0">
    <a class="nav-link active" href="#v3d">3D Viewer</a><a class="nav-link" href="#vtable">Table Viewer</a><a class="nav-link" href="#vchart">Chart Viewer</a><a class="nav-link" href="#vcomment">Comment Viewer</a><a class="nav-link border-0" href="#vreport">Report Viewer</a>
  </nav>
</main>
</div>
</body>
</html>
